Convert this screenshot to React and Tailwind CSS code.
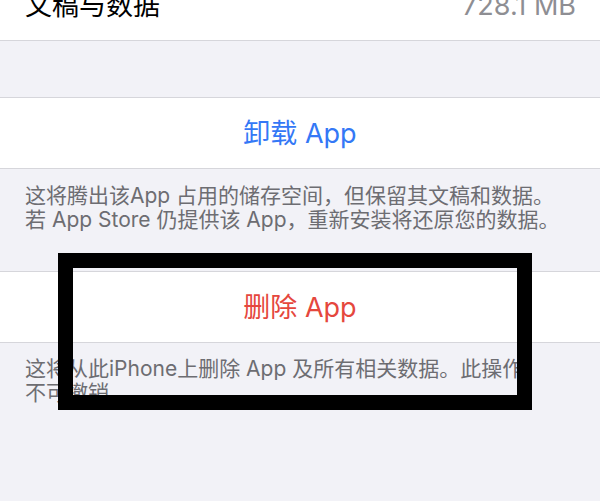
import React from "react";

export default function App() {
  return (
    <div className="relative w-[600px] h-[501px] overflow-hidden bg-[#f2f2f7] font-['Inter','Noto_Sans_CJK_SC',sans-serif]">
      <div className="flex flex-col">
        <div className="-mt-[30px] h-[71px] bg-white border-b border-[#d6d6db] flex items-center justify-between pl-[25px] pr-[24px]">
          <span className="text-[27px] text-black leading-none">文稿与数据</span>
          <span className="text-[27px] text-[#8e8e93] leading-none">728.1 MB</span>
        </div>
        <div className="h-[56px]" />
        <div className="h-[72px] bg-white border-y border-[#d6d6db] flex items-center justify-center">
          <span className="text-[27px] text-[#3478f6] leading-none">卸载 App</span>
        </div>
        <div className="pl-[25px] pt-[15px] pb-[39px] text-[21px] leading-[24px] text-[#6d6d72] whitespace-nowrap">
          <div>这将腾出该App 占用的储存空间，但保留其文稿和数据。</div>
          <div>若 App Store 仍提供该 App，重新安装将还原您的数据。</div>
        </div>
        <div className="h-[72px] bg-white border-y border-[#d6d6db] flex items-center justify-center">
          <span className="text-[27px] text-[#e5473d] leading-none">删除 App</span>
        </div>
        <div className="pl-[25px] pt-[14px] text-[21px] leading-[24px] text-[#6d6d72] whitespace-nowrap">
          <div>这将从此iPhone上删除 App 及所有相关数据。此操作</div>
          <div>不可撤销</div>
        </div>
      </div>
      <div className="absolute left-[58px] top-[253px] w-[474px] h-[157px] border-[15px] border-black" />
    </div>
  );
}
